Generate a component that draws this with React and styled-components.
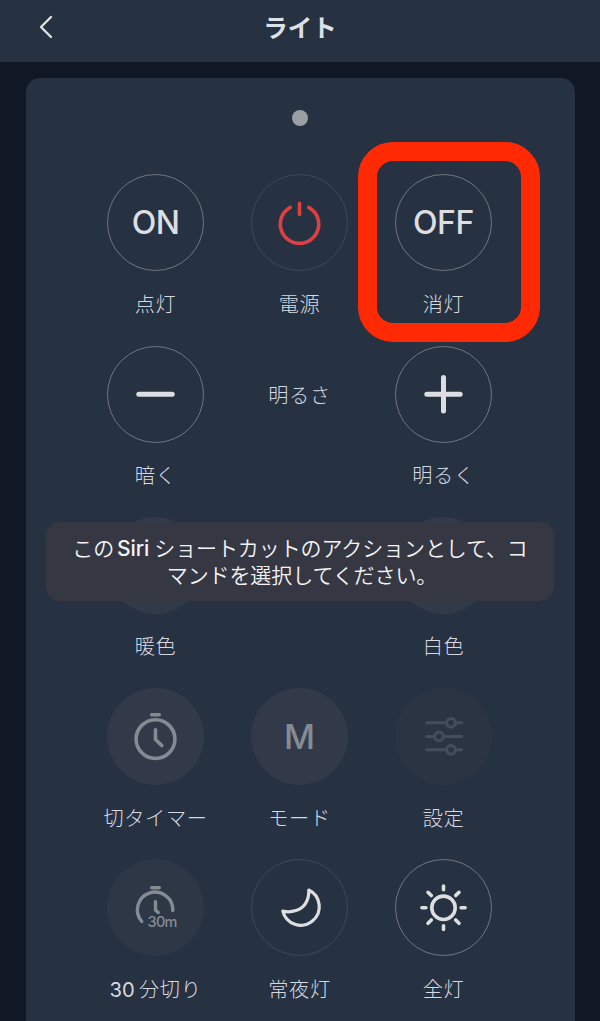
import React from "react";
import styled, { createGlobalStyle } from "styled-components";

const GlobalStyle = createGlobalStyle`
  * { box-sizing: border-box; }
  body {
    margin: 0;
    background: #111825;
    color: #d6dae0;
    font-family: Inter, "Noto Sans CJK JP", sans-serif;
  }
`;

const Screen = styled.div`
  width: 600px;
  height: 1021px;
  overflow: hidden;
  position: relative;
  background: #111825;
`;

const Header = styled.header`
  display: grid;
  grid-template-columns: 92px 1fr 92px;
  align-items: center;
  height: 62.4px;
  padding-bottom: 8px;
  background: #263141;
`;

const BackButton = styled.button`
  display: flex;
  justify-content: center;
  padding: 0;
  border: 0;
  background: none;
  color: #dde0e3;
`;

const Title = styled.h1`
  margin: 0;
  padding-top: 2px;
  text-align: center;
  font-size: 24.5px;
  line-height: 36px;
  font-weight: 700;
  color: #dde0e4;
`;

const Card = styled.main`
  width: 549px;
  height: 960px;
  margin: 16px 0 0 25.5px;
  padding-top: 31.6px;
  border-radius: 14px;
  background: #263141;
`;

const Indicator = styled.div`
  width: 16px;
  height: 16px;
  margin: 0 auto;
  border-radius: 50%;
  background: #9b9fa4;
`;

const Grid = styled.div`
  display: grid;
  grid-template-columns: repeat(3, 144px);
  grid-auto-rows: 171.25px;
  justify-content: center;
  margin: 48.5px 1px 0 0;
`;

const Cell = styled.div`
  display: flex;
  flex-direction: column;
  align-items: center;
`;

const looks = {
  outline: "border: 1.5px solid #727680;",
  faint: "border: 1.5px solid #414855;",
  filled: "background: #323a49;",
  dim: "background: #2d3746;",
  disabled: "background: #2b3443;",
};

const RoundButton = styled.button`
  display: flex;
  align-items: center;
  justify-content: center;
  width: 97px;
  height: 97px;
  padding: 0;
  border: 0;
  border-radius: 50%;
  background: none;
  color: ${(p) => p.$color || "#dcdee1"};
  ${(p) => looks[p.$look]}
`;

const Glyph = styled.span`
  padding-top: 1px;
  font-size: ${(p) => p.$size || 32}px;
  font-family: Inter, sans-serif;
  font-weight: ${(p) => p.$weight || 500};
  letter-spacing: ${(p) => p.$spacing || 0}px;
  line-height: 1;
`;

const Label = styled.span`
  margin-top: 18.5px;
  font-size: 20.2px;
  line-height: 30px;
  font-weight: 300;
  letter-spacing: 0.6px;
  white-space: nowrap;
`;

const Caption = styled(Label)`
  margin-top: 0;
  height: 97px;
  line-height: 99px;
`;

const Latin = styled.span`
  font-weight: 400;
  letter-spacing: 0;
  margin-right: -2px;
`;

const Highlight = styled.div`
  position: absolute;
  left: 358px;
  top: 142px;
  width: 182px;
  height: 200px;
  border: 19.5px solid #ff2a04;
  border-radius: 35px;
  pointer-events: none;
`;

const Toast = styled.div`
  position: absolute;
  left: 46px;
  top: 522px;
  width: 508px;
  height: 79px;
  display: flex;
  flex-direction: column;
  align-items: center;
  justify-content: center;
  border-radius: 14px;
  background: #353743;
  color: #f3f4f5;
  font-size: 21px;
  line-height: 27px;
  font-weight: 350;
  white-space: nowrap;
`;

const ToastLine = styled.div`
  padding-left: ${(p) => p.$indent || 0}px;
  letter-spacing: -0.1px;
`;

const SiriName = styled.span`
  margin: 0 5px 0 3px;
  font-weight: 500;
  letter-spacing: -0.1px;
`;

const IconSvg = styled.svg`
  flex: none;
  display: block;
  fill: none;
  stroke: currentColor;
  stroke-linecap: round;
  stroke-linejoin: round;
`;

const Minutes = styled.text`
  fill: currentColor;
  stroke: none;
  font: 500 14.5px Inter, sans-serif;
`;

const Icon = ({ width = 3.6, children }) => (
  <IconSvg width="81" height="81" viewBox="-40.5 -40.3 81 81" strokeWidth={width}>
    {children}
  </IconSvg>
);

const icons = {
  power: (
    <Icon>
      <path d="M-9.2 -15A19.2 19.2 0 1 0 9.2 -15M0 -19V-7.7" />
    </Icon>
  ),
  minus: (
    <Icon width={5}>
      <path d="M-16.7 0H16.7" />
    </Icon>
  ),
  plus: (
    <Icon width={5}>
      <path d="M-16.7 0H16.7M0 -16.9V16.7" />
    </Icon>
  ),
  timer: (
    <Icon>
      <circle cx="0" cy="2.8" r="19.4" />
      <path d="M-3.8 -21.6H3.8M0 -6.5V3.2L6.3 9.2" />
    </Icon>
  ),
  sliders: (
    <Icon width={3}>
      <path d="M-16.7 -13.5H3.1M11.9 -13.5H18.1M-16.7 0.1H-8.9M-0.1 0.1H18.1M-16.7 13.5H3.1M11.9 13.5H18.1" />
      <circle cx="7.5" cy="-13.5" r="4.4" />
      <circle cx="-4.5" cy="0.1" r="4.4" />
      <circle cx="7.5" cy="13.5" r="4.4" />
    </Icon>
  ),
  timer30: (
    <Icon width={3.4}>
      <path d="M-13.7 14.2A17.7 17.7 0 1 1 17.3 3.2M-3.8 -19.5H3.8M0 -5.5V2.8L2.8 5.2" />
      <Minutes x="-8" y="20" textLength="30">30m</Minutes>
    </Icon>
  ),
  moon: (
    <Icon width={3.2}>
      <path d="M9.3 -17.3A18.5 18.5 0 1 1 -16.7 3.8C-7.7 6 1.8 2.8 6.1 -4C8.9 -8.5 9.5 -13 9.3 -17.3Z" />
    </Icon>
  ),
  sun: (
    <Icon>
      <circle cx="0" cy="0.5" r="11.7" />
      <path d="M0 -21.2V-17.5M0 22.2V18.5M-21.6 .5H-17.6M21.6 .5H17.6M-15.5 -15L-12.2 -11.7M15.5 -15L12.2 -11.7M-15.5 16L-12.2 12.7M15.5 16L12.2 12.7" />
    </Icon>
  ),
};

const controls = [
  { label: "点灯", look: "outline", face: <Glyph $spacing={-0.6}>ON</Glyph> },
  { label: "電源", look: "faint", color: "#dc4043", face: icons.power },
  { label: "消灯", look: "outline", face: <Glyph $spacing={-0.4}>OFF</Glyph> },
  { label: "暗く", look: "outline", face: icons.minus },
  { caption: "明るさ" },
  { label: "明るく", look: "outline", face: icons.plus },
  { label: "暖色", look: "filled" },
  {},
  { label: "白色", look: "filled" },
  { label: "切タイマー", look: "filled", color: "#858b94", face: icons.timer },
  {
    label: "モード",
    look: "filled",
    color: "#858b94",
    face: <Glyph $size={34} $weight={550}>M</Glyph>,
  },
  { label: "設定", look: "disabled", color: "#464d5a", face: icons.sliders },
  {
    label: <><Latin>30</Latin> 分切り</>,
    look: "dim",
    color: "#858b94",
    face: icons.timer30,
  },
  { label: "常夜灯", look: "faint", face: icons.moon },
  { label: "全灯", look: "outline", face: icons.sun },
];

const Control = ({ label, caption, look, color, face }) => (
  <Cell>
    {look && <RoundButton $look={look} $color={color}>{face}</RoundButton>}
    {label && <Label>{label}</Label>}
    {caption && <Caption>{caption}</Caption>}
  </Cell>
);

export default function App() {
  return (
    <Screen>
      <GlobalStyle />
      <Header>
        <BackButton aria-label="戻る">
          <IconSvg width="16" height="26" viewBox="0 0 16 26" strokeWidth="2.4">
            <path d="M13 3L3 13L13 23" />
          </IconSvg>
        </BackButton>
        <Title>ライト</Title>
      </Header>
      <Card>
        <Indicator />
        <Grid>
          {controls.map((item, i) => (
            <Control key={i} {...item} />
          ))}
        </Grid>
      </Card>
      <Highlight />
      <Toast>
        <ToastLine>
          この<SiriName>Siri</SiriName>ショートカットのアクションとして、コ
        </ToastLine>
        <ToastLine $indent={4}>マンドを選択してください。</ToastLine>
      </Toast>
    </Screen>
  );
}
